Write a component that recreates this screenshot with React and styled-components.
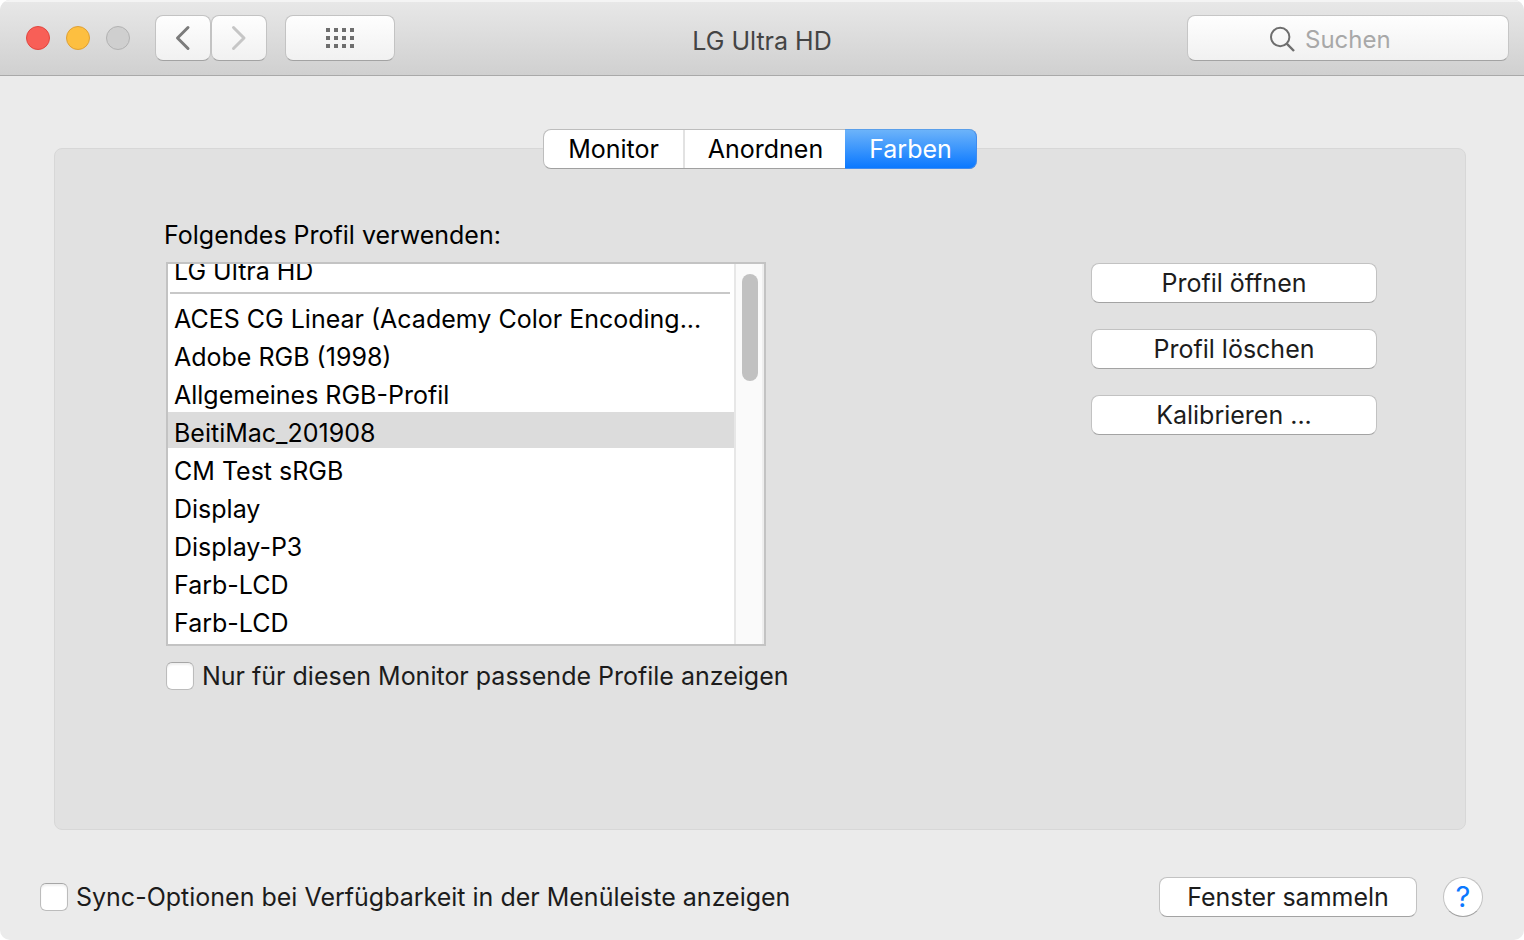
import React, { useEffect, useRef, useState } from "react";
import styled, { createGlobalStyle } from "styled-components";

const GlobalStyle = createGlobalStyle`
  * {
    box-sizing: border-box;
  }
  body {
    margin: 0;
    background: #fff;
  }
  body, button, input {
    font-family: Inter, "Liberation Sans", sans-serif;
    font-size: 25px;
    font-weight: 400;
    line-height: 36px;
    color: #1c1c1c;
  }
`;

const Window = styled.div`
  display: flex;
  flex-direction: column;
  min-height: 100vh;
  background: #ebebeb;
  border-radius: 10px;
  overflow: hidden;
`;
const TitleBar = styled.header`
  display: grid;
  grid-template-columns: 1fr auto 1fr;
  align-items: center;
  height: 76px;
  padding: 0 15px;
  background: linear-gradient(#e8e8e8, #d0d0d0);
  border-bottom: 1px solid #a9a9a9;
  box-shadow: inset 0 2px 0 #f4f4f4;
`;
const TitleLeft = styled.div`
  display: flex;
  align-items: center;
  gap: 18px;
  padding-left: 11px;
`;
const Lights = styled.div`
  display: flex;
  gap: 16px;
  margin-right: 7px;
`;
const Light = styled.button`
  width: 24px;
  height: 24px;
  padding: 0;
  border: 1px solid ${(props) => props.$border};
  border-radius: 50%;
  background: ${(props) => props.$color};
`;
const NavGroup = styled.div`
  display: flex;
`;
const ToolButton = styled.button`
  display: flex;
  align-items: center;
  justify-content: center;
  width: ${(props) => (props.$wide ? "110px" : "56px")};
  height: 46px;
  padding: 0;
  border: 1px solid #c3c3c3;
  border-bottom-color: #a3a3a3;
  border-radius: 8px;
  background: linear-gradient(#fefefe, #f1f1f1);
`;
const Title = styled.h1`
  margin: 0;
  padding-top: 6px;
  font-size: 25px;
  font-weight: 400;
  color: #444;
`;
const Search = styled.label`
  display: flex;
  align-items: center;
  justify-self: end;
  gap: 10px;
  width: 322px;
  height: 46px;
  padding: 2px 10px 0 81px;
  border: 1px solid #c6c6c6;
  border-bottom-color: #a3a3a3;
  border-radius: 8px;
  background: linear-gradient(#fefefe, #f1f1f1);
`;
const SearchInput = styled.input`
  flex: 1;
  min-width: 0;
  padding: 2px 0 0;
  border: none;
  outline: none;
  font-size: 24px;
  background: none;
  &::placeholder {
    color: #a8a8a8;
    opacity: 1;
  }
`;

const Main = styled.main`
  display: flex;
  flex: 1;
  flex-direction: column;
  padding: 53px 58px 0 54px;
`;
const Tabs = styled.div`
  display: flex;
  align-self: center;
  z-index: 1;
  height: 40px;
  border: 1px solid #bdbdbd;
  border-bottom-color: #a0a0a0;
  border-radius: 8px;
  background: #fff;
`;
const Tab = styled.button`
  width: ${(props) => props.$width}px;
  padding: 0;
  border: none;
  color: #000;
  background: none;
  & + & {
    border-left: 2px solid #e2e2e2;
  }
  &[aria-selected="true"] {
    margin: -1px;
    border: 1px solid #3f8cf0;
    border-top-color: #5a9fea;
    border-radius: 0 8px 8px 0;
    border-left: none;
    color: #fff;
    background: linear-gradient(#6cb3fa, #0a78ff);
  }
`;
const Panel = styled.section`
  display: flex;
  flex: 1;
  justify-content: space-between;
  margin-top: -21px;
  padding: 68px 88px 0 109px;
  border: 1px solid #d7d7d7;
  border-radius: 8px;
  background: #e1e1e1;
`;
const Profiles = styled.div`
  display: flex;
  flex-direction: column;
`;
const ListLabel = styled.div`
  margin-bottom: 9px;
  color: #000;
`;
const ListFrame = styled.div`
  display: flex;
  width: 600px;
  height: 384px;
  margin: 0 0 12px 2px;
  border: 2px solid #c3c3c3;
  background: #fff;
`;
const List = styled.ul`
  flex: 1;
  min-width: 0;
  margin: 0;
  padding: 0 0 8px;
  overflow-y: auto;
  list-style: none;
  scrollbar-width: none;
`;
const Row = styled.li`
  height: 36px;
  margin-bottom: 2px;
  padding: 3px 6px 0;
  line-height: 36px;
  color: #000;
  white-space: nowrap;
  background: ${(props) => (props.$selected ? "#dcdcdc" : "none")};
`;
const Separator = styled.li`
  height: 2px;
  margin: 6px 4px 4px 2px;
  background: #c8c8c8;
`;
const Track = styled.div`
  width: 30px;
  padding: 10px 4px 0 6px;
  border-left: 2px solid #e7e7e7;
  border-right: 2px solid #eee;
  background: #fafafa;
`;
const Thumb = styled.div`
  width: 16px;
  height: 107px;
  border-radius: 8px;
  background: #c1c1c1;
`;
const CheckLabel = styled.label`
  display: flex;
  align-items: center;
  gap: 8px;
  margin-left: ${(props) => (props.$inset ? "2px" : "0")};
`;
const Checkbox = styled.input`
  appearance: none;
  width: 28px;
  height: 28px;
  margin: 0;
  border: 1px solid #bcbcbc;
  border-top-color: #a6a6a6;
  border-radius: 6px;
  background: #fff;
  box-shadow: inset 0 2px 2px #f0f0f0;
  &:checked {
    background: #0a78ff;
  }
`;
const Actions = styled.div`
  display: flex;
  flex-direction: column;
  gap: 26px;
  padding-top: 46px;
`;
const Button = styled.button`
  width: ${(props) => props.$width}px;
  height: 40px;
  padding: 0;
  border: 1px solid #c2c2c2;
  border-bottom-color: #a3a3a3;
  border-radius: 8px;
  background: #fff;
`;
const Footer = styled.footer`
  display: flex;
  align-items: center;
  justify-content: space-between;
  padding: 47px 41px 23px 40px;
`;
const FooterRight = styled.div`
  display: flex;
  align-items: center;
  gap: 26px;
`;
const HelpButton = styled.button`
  width: 40px;
  height: 40px;
  padding: 0;
  border: 1px solid #c2c2c2;
  border-bottom-color: #a3a3a3;
  border-radius: 50%;
  font-size: 29px;
  color: #0a78ff;
  background: #fff;
`;

const tabs = [
  { name: "Monitor", width: 139 },
  { name: "Anordnen", width: 163 },
  { name: "Farben", width: 132 },
];

const profiles = [
  "ACES CG Linear (Academy Color Encoding...",
  "Adobe RGB (1998)",
  "Allgemeines RGB-Profil",
  "BeitiMac_201908",
  "CM Test sRGB",
  "Display",
  "Display-P3",
  "Farb-LCD",
  "Farb-LCD",
];

const Chevron = ({ d, color }) => (
  <svg width="16" height="26" viewBox="0 0 16 26" fill="none" stroke={color} strokeWidth="3" strokeLinecap="round" strokeLinejoin="round">
    <path d={d} />
  </svg>
);

const GridIcon = () => (
  <svg width="28" height="20" viewBox="0 0 28 20" fill="#6e6e6e">
    {[0, 8, 16].map((y) =>
      [0, 8, 16, 24].map((x) => <rect key={`${x}-${y}`} x={x} y={y} width="4" height="4" />)
    )}
  </svg>
);

const SearchIcon = () => (
  <svg width="26" height="26" viewBox="0 0 26 26" fill="none" stroke="#6e6e6e" strokeWidth="2">
    <circle cx="11.2" cy="11" r="9.2" />
    <path d="M17.7 17.6L25 25" strokeWidth="2.4" />
  </svg>
);

function App() {
  const [activeTab, setActiveTab] = useState("Farben");
  const [selected, setSelected] = useState(3);
  const listRef = useRef(null);

  // start slightly scrolled, the current display sits half under the top edge
  useEffect(() => {
    listRef.current.scrollTop = 14;
  }, []);

  return (
    <>
      <GlobalStyle />
      <Window>
        <TitleBar>
          <TitleLeft>
            <Lights>
              <Light $color="#f85f57" $border="#e2463f" aria-label="Schließen" />
              <Light $color="#fdbf40" $border="#dfa035" aria-label="Minimieren" />
              <Light $color="#cfcfcf" $border="#b2b2b2" aria-label="Zoomen" />
            </Lights>
            <NavGroup>
              <ToolButton aria-label="Zurück">
                <Chevron d="M13 2.5L2.5 13L13 23.5" color="#7b7b7b" />
              </ToolButton>
              <ToolButton aria-label="Vorwärts">
                <Chevron d="M2.5 2.5L13 13L2.5 23.5" color="#c6c6c6" />
              </ToolButton>
            </NavGroup>
            <ToolButton $wide aria-label="Alle einblenden">
              <GridIcon />
            </ToolButton>
          </TitleLeft>
          <Title>LG Ultra HD</Title>
          <Search>
            <SearchIcon />
            <SearchInput type="text" placeholder="Suchen" aria-label="Suchen" />
          </Search>
        </TitleBar>
        <Main>
          <Tabs role="tablist">
            {tabs.map((tab) => (
              <Tab
                key={tab.name}
                role="tab"
                $width={tab.width}
                aria-selected={activeTab === tab.name}
                onClick={() => setActiveTab(tab.name)}
              >
                {tab.name}
              </Tab>
            ))}
          </Tabs>
          <Panel>
            <Profiles>
              <ListLabel id="profile-label">Folgendes Profil verwenden:</ListLabel>
              <ListFrame>
                <List ref={listRef} role="listbox" aria-labelledby="profile-label" tabIndex={0}>
                  <Row role="option" aria-selected={false}>LG Ultra HD</Row>
                  <Separator role="separator" />
                  {profiles.map((profile, index) => (
                    <Row
                      key={index}
                      role="option"
                      aria-selected={selected === index}
                      $selected={selected === index}
                      onClick={() => setSelected(index)}
                    >
                      {profile}
                    </Row>
                  ))}
                </List>
                <Track>
                  <Thumb />
                </Track>
              </ListFrame>
              <CheckLabel $inset>
                <Checkbox type="checkbox" />
                Nur für diesen Monitor passende Profile anzeigen
              </CheckLabel>
            </Profiles>
            <Actions>
              <Button $width={286}>Profil öffnen</Button>
              <Button $width={286}>Profil löschen</Button>
              <Button $width={286}>Kalibrieren ...</Button>
            </Actions>
          </Panel>
        </Main>
        <Footer>
          <CheckLabel>
            <Checkbox type="checkbox" />
            Sync-Optionen bei Verfügbarkeit in der Menüleiste anzeigen
          </CheckLabel>
          <FooterRight>
            <Button $width={258}>Fenster sammeln</Button>
            <HelpButton aria-label="Hilfe">?</HelpButton>
          </FooterRight>
        </Footer>
      </Window>
    </>
  );
}

export default App;
